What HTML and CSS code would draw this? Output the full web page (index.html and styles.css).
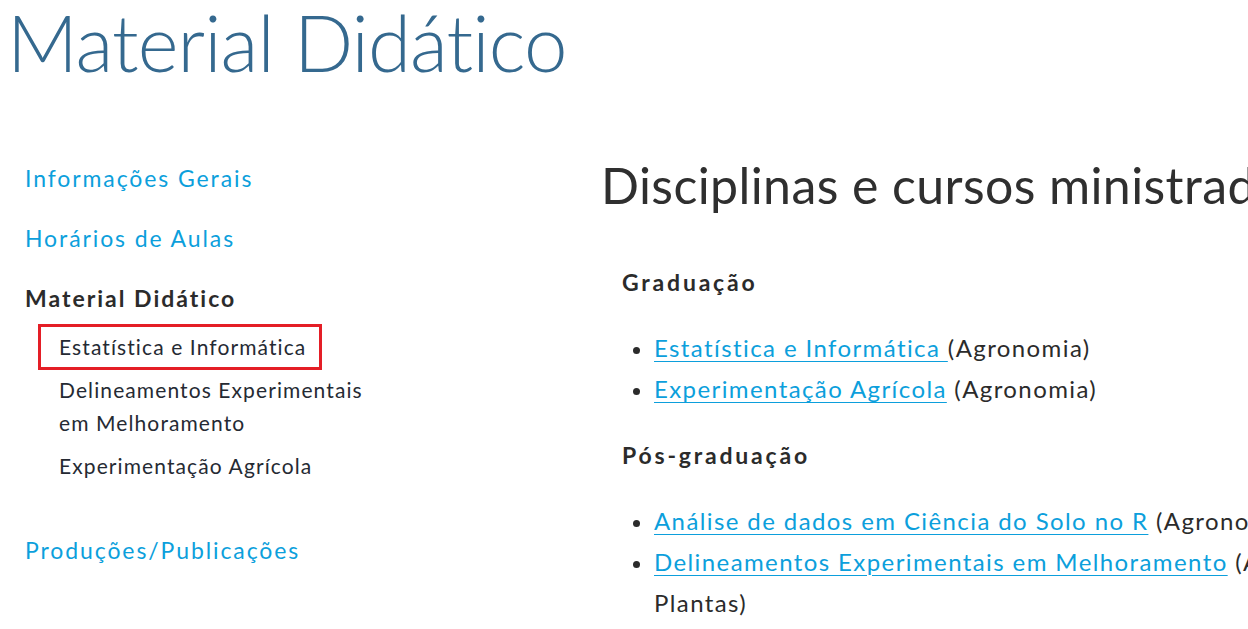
FILE: index.html
```html
<!DOCTYPE html>
<html lang="pt-BR">
<head>
<meta charset="utf-8">
<title>Material Didático</title>
<link rel="stylesheet" href="styles.css">
</head>
<body>
<h1 class="page-title">Material Didático</h1>
<div class="layout">
  <nav class="sidebar">
    <ul class="nav">
      <li class="nav-item"><a class="nav-link" href="#">Informações Gerais</a></li>
      <li class="nav-item"><a class="nav-link" href="#">Horários de Aulas</a></li>
      <li class="nav-item nav-item-open">
        <span class="nav-current">Material Didático</span>
        <ul class="subnav">
          <li class="subnav-item"><a class="subnav-link subnav-marked" href="#">Estatística e Informática</a></li>
          <li class="subnav-item"><a class="subnav-link" href="#">Delineamentos Experimentais em Melhoramento</a></li>
          <li class="subnav-item"><a class="subnav-link" href="#">Experimentação Agrícola</a></li>
        </ul>
      </li>
      <li class="nav-item"><a class="nav-link" href="#">Produções/Publicações</a></li>
    </ul>
  </nav>
  <main class="main">
    <h2 class="main-title">Disciplinas e cursos ministrados</h2>
    <h3 class="section-title section-first">Graduação</h3>
    <ul class="course-list">
      <li class="course"><a href="#">Estatística e Informática </a>(Agronomia)</li>
      <li class="course"><a href="#">Experimentação Agrícola</a> (Agronomia)</li>
    </ul>
    <h3 class="section-title">Pós-graduação</h3>
    <ul class="course-list">
      <li class="course"><a href="#">Análise de dados em Ciência do Solo no R</a> (Agronomia - Ciência do Solo)</li>
      <li class="course"><span class="nowrap"><a href="#">Delineamentos Experimentais em Melhoramento</a> (Agronomia - Genética e Melhoramento de</span> Plantas)</li>
    </ul>
  </main>
</div>
</body>
</html>
```

FILE: styles.css
```css
html {
  overflow: hidden;
}

body {
  margin: 0;
  background: #ffffff;
  font-family: Lato, "Open Sans", "Liberation Sans", sans-serif;
  color: #333333;
}

a {
  color: #0c9fdc;
  text-decoration: none;
}

ul {
  list-style: none;
  margin: 0;
  padding: 0;
}

.page-title {
  margin: 2px 0 0;
  padding-left: 7px;
  font-size: 78px;
  line-height: 80px;
  font-weight: 300;
  letter-spacing: -0.9px;
  color: #35698f;
  white-space: nowrap;
}

.layout {
  display: flex;
  margin-top: 73px;
}

.sidebar {
  flex: 0 0 600px;
  box-sizing: border-box;
  padding: 7.5px 0 0 25px;
}

.nav-item {
  margin-bottom: 30px;
}

.nav-item-open {
  margin-bottom: 52.5px;
}

.nav-link,
.nav-current {
  display: block;
  font-size: 23px;
  line-height: 30px;
  letter-spacing: 1.9px;
}

.nav-current {
  font-weight: 700;
  color: #2b2b2b;
  letter-spacing: 2px;
}

.subnav {
  margin: 17.5px 0 0;
  padding-left: 34px;
  width: 320px;
}

.subnav-item {
  margin-bottom: 10px;
  font-size: 21px;
  line-height: 33px;
}

.subnav-item:last-child {
  margin-bottom: 0;
}

.subnav-link {
  color: #252a33;
  letter-spacing: 1.1px;
}

.subnav-marked {
  position: relative;
}

.subnav-marked::after {
  content: "";
  position: absolute;
  top: -10.5px;
  bottom: -10.5px;
  left: -21px;
  right: -16px;
  border: 3px solid #e41e26;
}

.main {
  flex: 0 0 972px;
  padding-left: 1px;
}

.main-title {
  margin: 0;
  font-size: 50px;
  line-height: 60px;
  font-weight: 400;
  letter-spacing: 0.4px;
  color: #2f2f2f;
  white-space: nowrap;
}

.section-title {
  margin: 30.5px 0 0 21px;
  font-size: 23px;
  line-height: 30px;
  font-weight: 700;
  letter-spacing: 2.8px;
  color: #2b2b2b;
}

.section-first {
  margin-top: 52px;
}

.course-list {
  margin: 30px 0 0 53px;
}

.course {
  font-size: 24px;
  line-height: 41px;
  letter-spacing: 1.4px;
  color: #2b2b2b;
}

.course::before {
  content: "";
  display: inline-block;
  width: 7px;
  height: 7px;
  border-radius: 50%;
  background: #2b2b2b;
  margin-left: -21.5px;
  margin-right: 14.5px;
  vertical-align: middle;
}

.course a {
  text-decoration: underline;
  text-decoration-thickness: 1px;
  text-underline-offset: 4px;
}

.nowrap {
  white-space: nowrap;
}
```
